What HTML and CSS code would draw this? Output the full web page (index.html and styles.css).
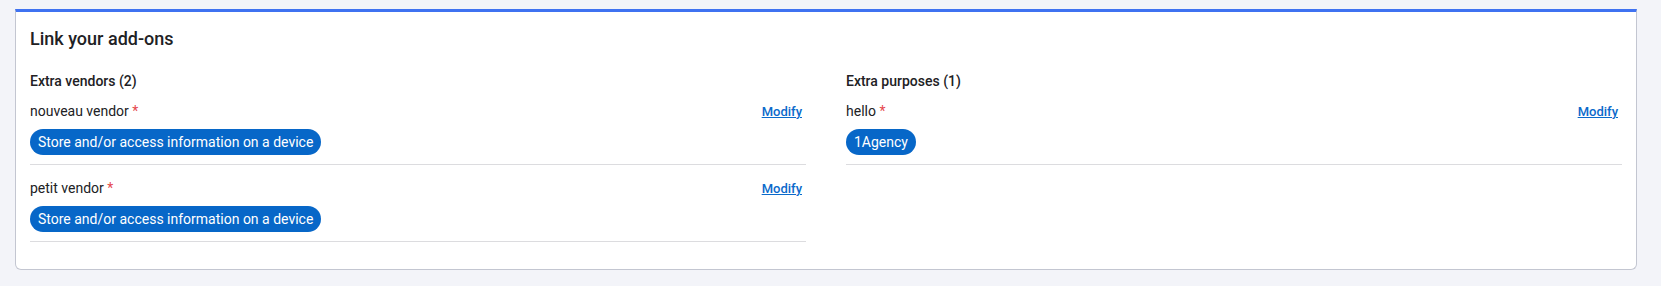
FILE: index.html
```html
<!DOCTYPE html>
<html lang="en">
<head>
<meta charset="utf-8">
<title>Link your add-ons</title>
<link rel="stylesheet" href="styles.css">
</head>
<body>
<section class="card">
  <h2 class="card-title">Link your add-ons</h2>
  <div class="columns">
    <div class="column">
      <h3 class="section-title">Extra vendors (2)</h3>
      <ul class="items">
        <li class="item">
          <div class="item-head">
            <span class="item-name">nouveau vendor <span class="req">*</span></span>
            <a class="modify" href="#">Modify</a>
          </div>
          <div class="chips"><span class="chip">Store and/or access information on a device</span></div>
        </li>
        <li class="item">
          <div class="item-head">
            <span class="item-name">petit vendor <span class="req">*</span></span>
            <a class="modify" href="#">Modify</a>
          </div>
          <div class="chips"><span class="chip">Store and/or access information on a device</span></div>
        </li>
      </ul>
    </div>
    <div class="column">
      <h3 class="section-title">Extra purposes (1)</h3>
      <ul class="items">
        <li class="item">
          <div class="item-head">
            <span class="item-name">hello <span class="req">*</span></span>
            <a class="modify" href="#">Modify</a>
          </div>
          <div class="chips"><span class="chip">1Agency</span></div>
        </li>
      </ul>
    </div>
  </div>
</section>
</body>
</html>
```

FILE: styles.css
```css
* { box-sizing: border-box; }
html, body { margin: 0; padding: 0; }
body {
  background: #f3f4f9;
  font-family: Roboto, "Liberation Sans", Arial, sans-serif;
  color: #212124;
  padding: 9px 24px 0 15px;
}
.card {
  background: #ffffff;
  border: 1px solid #c3c6d1;
  border-top: 3px solid #3f72f1;
  border-radius: 0 0 6px 6px;
  padding: 15px 14px 26px 14px;
  height: 261px;
}
.card-title {
  margin: 0;
  font-size: 18px;
  line-height: 24px;
  font-weight: 500;
  color: #212124;
}
.columns {
  display: grid;
  grid-template-columns: 1fr 1fr;
  column-gap: 40px;
  margin-top: 20px;
}
.section-title {
  margin: 0;
  font-size: 14px;
  line-height: 20px;
  font-weight: 500;
}
.items {
  list-style: none;
  margin: 0;
  padding: 0;
}
.item {
  padding: 13px 0 9px 0;
  border-bottom: 1px solid #dcdcdf;
}
.item:first-child { padding-top: 10px; }
.item-head {
  display: flex;
  justify-content: space-between;
  align-items: center;
  height: 20px;
  padding-right: 4px;
}
.item-name {
  font-size: 14px;
  line-height: 20px;
}
.req { color: #e5484d; }
.modify {
  font-size: 13px;
  font-weight: 500;
  color: #0b6acb;
  text-decoration: underline;
}
.chips {
  display: flex;
  gap: 6px;
  margin-top: 8px;
}
.chip {
  display: inline-flex;
  align-items: center;
  height: 26px;
  padding: 0 8px;
  border-radius: 13px;
  background: #0767c8;
  color: #ffffff;
  font-size: 14px;
}
```
